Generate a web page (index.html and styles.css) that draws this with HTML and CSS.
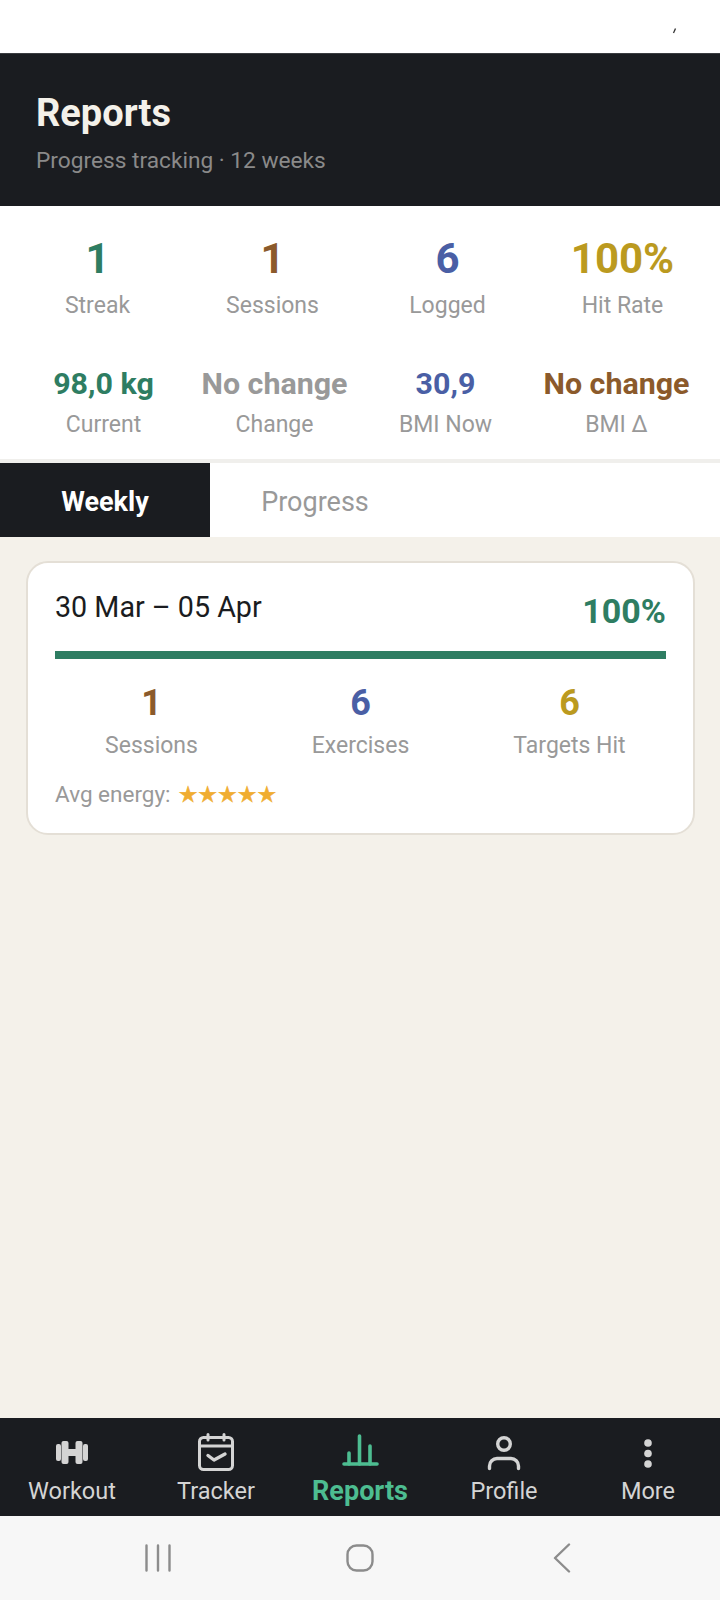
FILE: index.html
```html
<!DOCTYPE html>
<html lang="en">
<head>
    <meta charset="UTF-8">
    <meta name="viewport" content="width=device-width, initial-scale=1.0">
    <title>Reports</title>
    <link rel="stylesheet" href="styles.css">
</head>
<body>
    <div class="status-bar">
        <svg class="status-tick" width="6" height="8" viewBox="0 0 6 8"><path d="M4.500 1.500 L2.500 6" stroke="#333" stroke-width="1.300"/></svg>
    </div>

    <header class="page-header">
        <h1>Reports</h1>
        <div class="page-subtitle">Progress tracking · 12 weeks</div>
    </header>

    <section class="summary">
        <div class="summary-row">
            <div class="stat"><div class="stat-value green">1</div><div class="stat-label">Streak</div></div>
            <div class="stat"><div class="stat-value brown">1</div><div class="stat-label">Sessions</div></div>
            <div class="stat"><div class="stat-value blue">6</div><div class="stat-label">Logged</div></div>
            <div class="stat"><div class="stat-value gold">100%</div><div class="stat-label">Hit Rate</div></div>
        </div>
        <div class="summary-row small">
            <div class="stat"><div class="stat-value green">98,0 kg</div><div class="stat-label">Current</div></div>
            <div class="stat"><div class="stat-value grey">No change</div><div class="stat-label">Change</div></div>
            <div class="stat"><div class="stat-value blue">30,9</div><div class="stat-label">BMI Now</div></div>
            <div class="stat"><div class="stat-value brown">No change</div><div class="stat-label">BMI Δ</div></div>
        </div>
    </section>

    <div class="tabs">
        <div class="tab active">Weekly</div>
        <div class="tab">Progress</div>
    </div>

    <main class="content">
        <div class="week-card">
            <div class="week-head">
                <div class="week-date">30 Mar – 05 Apr</div>
                <div class="week-rate green">100%</div>
            </div>
            <div class="week-bar"><div class="week-bar-fill" style="width: 100%"></div></div>
            <div class="week-stats">
                <div class="week-stat"><div class="week-value brown">1</div><div class="stat-label">Sessions</div></div>
                <div class="week-stat"><div class="week-value blue">6</div><div class="stat-label">Exercises</div></div>
                <div class="week-stat"><div class="week-value gold">6</div><div class="stat-label">Targets Hit</div></div>
            </div>
            <div class="week-energy">Avg energy: <span class="stars">★★★★★</span></div>
        </div>
    </main>

    <nav class="bottom-nav">
        <div class="nav-item">
            <svg width="40" height="40" viewBox="0 0 40 40" fill="#d4d4d4">
                <rect x="4" y="12" width="5" height="17" rx="2"/>
                <rect x="9.500" y="9" width="7" height="23" rx="2"/>
                <rect x="16" y="17" width="8" height="7"/>
                <rect x="23.500" y="9" width="7" height="23" rx="2"/>
                <rect x="31" y="12" width="5" height="17" rx="2"/>
            </svg>
            <span>Workout</span>
        </div>
        <div class="nav-item">
            <svg width="40" height="40" viewBox="0 0 40 40" fill="none" stroke="#d4d4d4" stroke-width="3" stroke-linecap="round" stroke-linejoin="round">
                <rect x="3.500" y="5.500" width="33" height="32" rx="4"/>
                <path d="M3.500 14 H36.500"/>
                <path d="M12 2.500 V8 M28 2.500 V8"/>
                <path d="M12 23.500 L18 28 L29 22" stroke-width="3.400"/>
            </svg>
            <span>Tracker</span>
        </div>
        <div class="nav-item active">
            <svg width="40" height="40" viewBox="0 0 40 40" fill="none" stroke="#4dbd91" stroke-width="3.600" stroke-linecap="round">
                <path d="M4 32 H37"/>
                <path d="M9 32 V21 M19.500 32 V4 M30 32 V14"/>
            </svg>
            <span>Reports</span>
        </div>
        <div class="nav-item">
            <svg width="40" height="40" viewBox="0 0 40 40" fill="none" stroke="#d4d4d4" stroke-width="3.400" stroke-linecap="round">
                <circle cx="20" cy="12" r="6.300"/>
                <path d="M5.500 36.500 V34 A7.500 7.500 0 0 1 13 26.500 H27 A7.500 7.500 0 0 1 34.500 34 V36.500"/>
            </svg>
            <span>Profile</span>
        </div>
        <div class="nav-item">
            <svg width="40" height="40" viewBox="0 0 40 40" fill="#d4d4d4">
                <circle cx="20" cy="11" r="3.800"/>
                <circle cx="20" cy="21.500" r="3.800"/>
                <circle cx="20" cy="32" r="3.800"/>
            </svg>
            <span>More</span>
        </div>
    </nav>

    <div class="system-nav">
        <svg width="26" height="28" viewBox="0 0 26 28" fill="none" stroke="#8c8c8c" stroke-width="2.400" stroke-linecap="round">
            <path d="M1.500 1.500 V26.500 M13 1.500 V26.500 M24.500 1.500 V26.500"/>
        </svg>
        <svg width="28" height="28" viewBox="0 0 28 28" fill="none" stroke="#8c8c8c" stroke-width="2.400">
            <rect x="1.500" y="1.500" width="25" height="25" rx="9"/>
        </svg>
        <svg width="18" height="30" viewBox="0 0 18 30" fill="none" stroke="#8c8c8c" stroke-width="2.400" stroke-linecap="round" stroke-linejoin="round">
            <path d="M16 1.500 L2 15 L16 28.500"/>
        </svg>
    </div>
</body>
</html>
```

FILE: styles.css
```css
* {
    box-sizing: border-box;
}
body {
    margin: 0;
    display: flex;
    flex-direction: column;
    height: 1600px;
    font-family: Roboto, "Noto Sans", sans-serif;
    background-color: #fff;
}
.status-bar {
    height: 53px;
    padding: 27px 43px 0 0;
    display: flex;
    justify-content: flex-end;
    align-items: flex-start;
    background-color: #fff;
}
.page-header {
    height: 153px;
    padding: 37px 36px 0;
    background-color: #1a1c20;
    border-top: 1px solid #3a3c40;
}
.page-header h1 {
    margin: 0;
    font-size: 38px;
    line-height: 44px;
    font-weight: 700;
    color: #f4f1ea;
}
.page-subtitle {
    margin-top: 12px;
    font-size: 22.7px;
    line-height: 28px;
    color: #8a8a8a;
}
.summary {
    height: 253px;
    padding-top: 29px;
    background-color: #fff;
}
.summary-row {
    display: grid;
    grid-template-columns: repeat(4, 1fr);
    padding: 0 10px;
}
.summary-row.small {
    margin-top: 47px;
    padding: 0 18px;
}
.stat {
    text-align: center;
}
.stat-value {
    font-size: 42px;
    line-height: 47px;
    font-weight: 700;
}
.small .stat-value {
    font-size: 30.400px;
    line-height: 36px;
}
.stat-label {
    margin-top: 11px;
    font-size: 23px;
    line-height: 26px;
    color: #999;
}
.small .stat-label {
    margin-top: 10px;
}
.green { color: #2e7d62; }
.brown { color: #8b5a2b; }
.blue { color: #4a5fa5; }
.gold { color: #bb9a1f; }
.grey { color: #999; }
.tabs {
    display: flex;
    height: 78px;
    background-color: #fff;
    border-top: 4px solid #f0efec;
}
.tab {
    width: 210px;
    padding-top: 3px;
    display: flex;
    align-items: center;
    justify-content: center;
    font-size: 27px;
    color: #999;
}
.tab.active {
    background-color: #1a1c20;
    color: #fff;
    font-weight: 700;
}
.content {
    flex: 1;
    padding: 24px 25px 24px 26px;
    background-color: #f4f1ea;
}
.week-card {
    height: 274px;
    padding: 28px 27px 0;
    background-color: #fff;
    border: 2px solid #e4dfd6;
    border-radius: 22px;
}
.week-head {
    display: flex;
    justify-content: space-between;
    align-items: flex-start;
}
.week-date {
    font-size: 28.700px;
    line-height: 33px;
    color: #1a1c20;
}
.week-rate {
    font-size: 34px;
    line-height: 40px;
    font-weight: 700;
}
.week-bar {
    height: 8px;
    margin-top: 20px;
    background-color: #e4dfd6;
}
.week-bar-fill {
    height: 100%;
    background-color: #2e7d62;
}
.week-stats {
    display: grid;
    grid-template-columns: repeat(3, 1fr);
    gap: 16px;
    margin-top: 24px;
}
.week-stat {
    text-align: center;
}
.week-value {
    font-size: 36px;
    line-height: 41px;
    font-weight: 700;
}
.week-stats .stat-label {
    margin-top: 9px;
}
.week-energy {
    margin-top: 20px;
    font-size: 22.500px;
    line-height: 30px;
    color: #999;
}
.stars {
    margin-left: 2px;
    font-family: "DejaVu Sans", sans-serif;
    font-size: 22px;
    color: #f0ad30;
    -webkit-text-stroke: 0.5px #f0ad30;
}
.bottom-nav {
    display: grid;
    grid-template-columns: repeat(5, 1fr);
    height: 98px;
    background-color: #1a1c20;
}
.nav-item {
    display: flex;
    flex-direction: column;
    align-items: center;
    padding-top: 14px;
    font-size: 23.500px;
    line-height: 28px;
    color: #d4d4d4;
}
.nav-item span {
    margin-top: 5px;
}
.nav-item.active {
    color: #4dbd91;
    font-size: 27px;
    font-weight: 700;
}
.system-nav {
    height: 84px;
    padding: 0 57px;
    display: grid;
    grid-template-columns: repeat(3, 1fr);
    align-items: center;
    justify-items: center;
    background-color: #f7f7f7;
}
```
